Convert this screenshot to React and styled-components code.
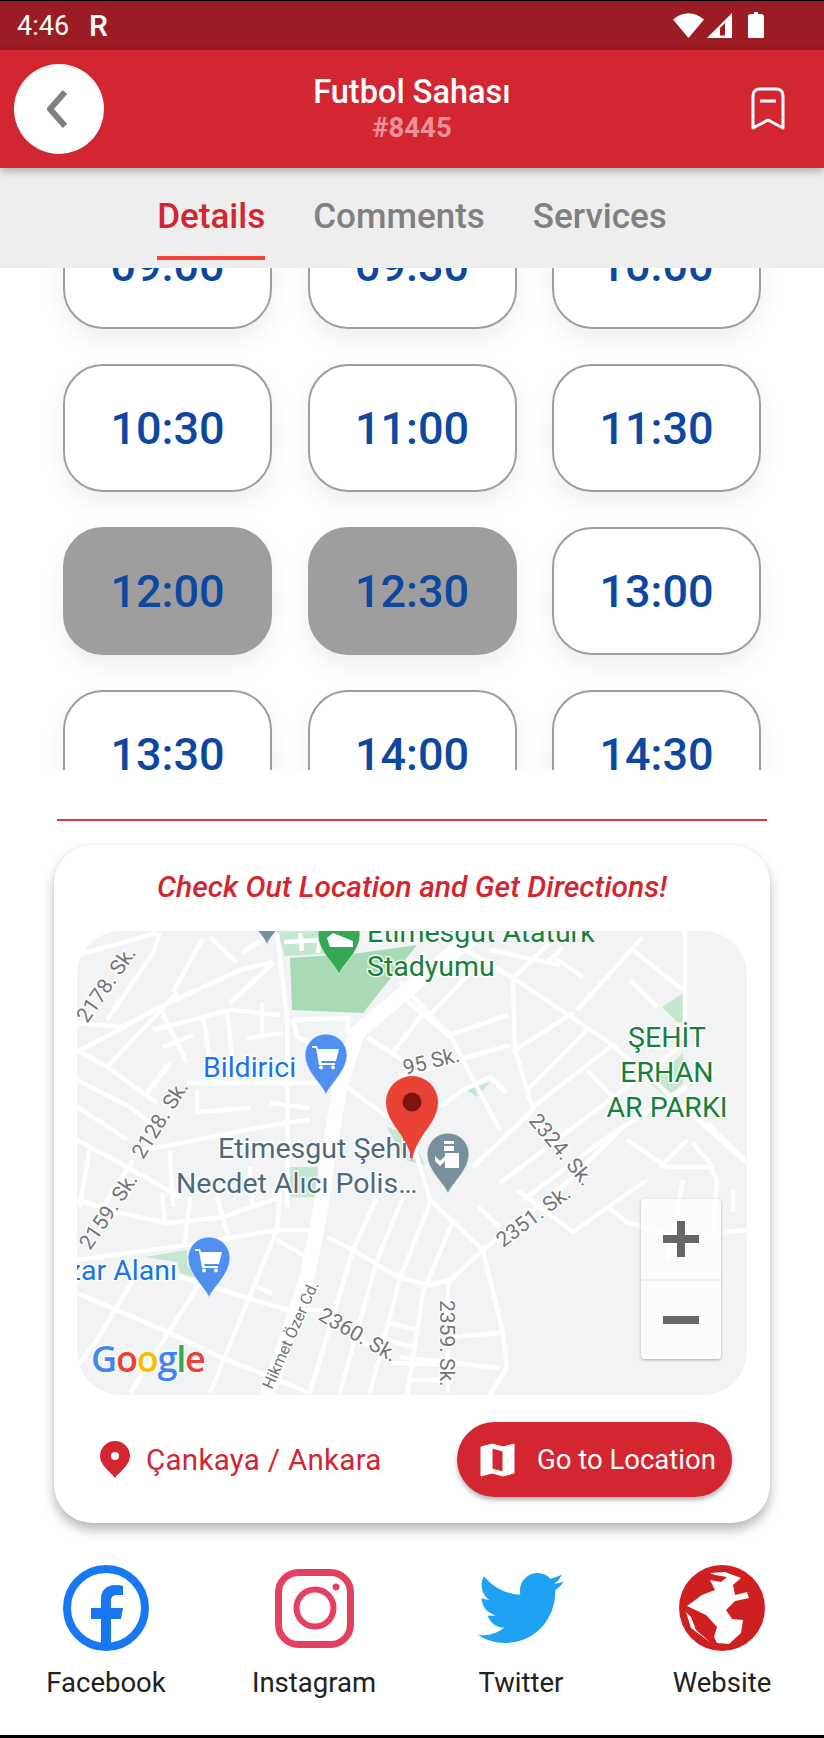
import styled, { createGlobalStyle } from 'styled-components';
import { FaTwitter } from 'react-icons/fa';

const times = [
  '09:00', '09:30', '10:00',
  '10:30', '11:00', '11:30',
  '12:00', '12:30', '13:00',
  '13:30', '14:00', '14:30',
];
const busyTimes = ['12:00', '12:30'];

// streets traced from the reference, in page coordinates (map starts at 77,931)
const roads = [
  '77,955 157,933', '107,1020 153,953 160,933', '77,1023 123,1027 160,1007 240,970 273,962',
  '160,1008 187,1063', '203,938 173,992', '237,963 210,937', '243,952 273,933', '230,1003 273,963',
  '277,933 287,1017 288,1137 287,1207', '153,1030 230,1010 280,1015', '163,1047 193,1035',
  '247,1038 283,1033', '262,1003 262,1037', '203,1015 213,1083', '227,1013 235,1083',
  '187,1083 323,1083', '197,1090 197,1112 250,1108', '270,1103 310,1108', '147,1093 170,1063',
  '293,1020 348,1018 347,1033', '293,1020 297,1037 310,1042', '80,1050 125,1027',
  '77,1050 107,1067 157,1103', '107,1067 177,993', '77,1080 130,1107 155,1127',
  '77,1107 113,1130 127,1140', '77,1140 127,1167 180,1197', '130,1153 283,1123 310,1120',
  '90,1147 80,1207', '133,1160 103,1207', '170,1150 173,1207', '250,1167 253,1207',
  '77,1200 120,1213 167,1223 223,1217 280,1197', '162,1193 165,1223', '190,1197 185,1243',
  '217,1197 228,1235', '280,1193 277,1230', '77,1260 187,1245 277,1230 313,1230',
  '277,1230 247,1303 210,1393', '200,1283 130,1393', '133,1280 97,1340 77,1367',
  '277,1240 307,1257', '257,1287 272,1293', '180,1277 287,1310 320,1310 393,1363 450,1365',
  '77,1293 170,1333 220,1357 310,1393', '327,1237 353,1250 400,1278 430,1285 450,1280 483,1250',
  '377,1197 353,1250 310,1393', '403,1197 377,1260 340,1393', '430,1203 400,1278 370,1393',
  '390,1323 417,1330', '387,1340 413,1347', '347,1087 387,1117 410,1133 430,1200 483,1250',
  '367,1037 407,1063', '403,997 450,1037', '423,1013 393,1053', '400,982 430,1015 450,1035 480,1093 500,1130',
  '430,1015 470,973', '450,1035 508,1015', '400,1077 510,1045', '440,1107 463,1090 490,1077 507,1093',
  '440,935 513,978 610,1043 747,1163', '513,978 515,1050 533,1110', '513,978 560,933',
  '577,1010 643,937', '633,950 683,990', '630,980 657,1007', '685,931 685,1040', '515,1050 573,1013',
  '527,1090 590,1027', '533,1107 610,1047', '587,1070 613,1097', '473,1167 533,1110',
  '500,1183 587,1117 680,1047', '523,1200 613,1133 687,1087', '627,1140 667,1167 710,1167 717,1180',
  '687,1140 660,1167', '693,1143 713,1167', '707,1123 747,1163', '490,950 560,965',
  '547,962 563,948', '553,957 583,977', '483,1250 570,1180 620,1130', '517,1190 573,1232 608,1207 647,1180',
  '608,1207 627,1222 677,1237 747,1230', '478,1207 500,1227', '452,1223 423,1293 407,1395',
  '483,1250 503,1333 507,1367 490,1395', '450,1337 500,1333', '400,1357 500,1368', '410,1380 443,1380',
  '448,1280 448,1393', '683,1180 673,1237 667,1260', '717,1180 713,1230', '733,1190 733,1212',
];

const parks = [
  '467,1090 490,1082 477,1097', '662,1007 685,992 685,1023 677,1022', '650,1083 683,1053 683,1083 667,1097',
  '387,1127 410,1135 425,1165 405,1160', '145,1257 187,1250 187,1265 197,1278 180,1273 177,1262',
  '287,1167 318,1167 318,1197 287,1197',
];

const streetLabels = [
  { text: '2178. Sk.', x: 87, y: 1024, angle: -55 },
  { text: '2128. Sk.', x: 143, y: 1160, angle: -58 },
  { text: '2159. Sk.', x: 90, y: 1251, angle: -56 },
  { text: '95 Sk.', x: 405, y: 1075, angle: -14 },
  { text: '2324. Sk.', x: 528, y: 1121, angle: 50 },
  { text: '2351. Sk.', x: 503, y: 1248, angle: -37 },
  { text: '2360. Sk.', x: 317, y: 1319, angle: 30 },
  { text: '2359. Sk.', x: 440, y: 1300, angle: 90 },
  { text: 'Hikmet Özer Cd.', x: 272, y: 1390, angle: -66, size: 16 },
];

const socials = [
  { name: 'Facebook', icon: <FacebookIcon /> },
  { name: 'Instagram', icon: <InstagramIcon /> },
  { name: 'Twitter', icon: <FaTwitter size={86} color="#1da1f2" /> },
  { name: 'Website', icon: <GlobeIcon /> },
];

function FacebookIcon() {
  return (
    <svg width="86" height="86" viewBox="0 0 86 86">
      <circle cx="43" cy="43" r="39" fill="none" stroke="#1877f2" strokeWidth="8" />
      <path
        fill="#1877f2"
        d="M38 84V54H28V43H38V34C38 25 44 20 52 20C55 20 58 20.4 60 21V30H54C50 30 48 32 48 36V43H60L58 54H48V84Z"
      />
    </svg>
  );
}

function InstagramIcon() {
  return (
    <svg width="79" height="79" viewBox="0 0 79 79" fill="none" stroke="#e4405f">
      <rect x="3.5" y="3.5" width="72" height="72" rx="20" strokeWidth="7" />
      <circle cx="40" cy="39" r="18.5" strokeWidth="6" />
      <circle cx="61" cy="18" r="3.5" fill="#e4405f" stroke="none" />
    </svg>
  );
}

function GlobeIcon() {
  return (
    <svg width="86" height="86" viewBox="0 0 86 86">
      <circle cx="43" cy="43" r="43" fill="#ce2020" />
      <path
        fill="#fff"
        d="M31 8L46 7L62 13L54 20L56 30L68 27L70 33L56 36L47 45L53 54L64 55L62 68L50 79L38 78L35 72L38 62L27 50L8 41L23 30L36 25L31 15L42 17L48 12L36 10Z"
      />
      <path fill="#fff" d="M7 47L12 63L32 78L17 65L12 52Z" />
    </svg>
  );
}

function StatusIcons() {
  return (
    <svg width="92" height="27" viewBox="0 0 92 27" fill="#fff">
      <path d="M15.5 26L0 7.5Q15.5 -5 31 7.5Z" />
      <path fillRule="evenodd" d="M34 26L59 1V26ZM52 11L47 16V23.5H52Z" />
      <path d="M79 2H81V0H85V2H87Q91 2 91 4V25Q91 26 89 26H77Q75 26 75 25V4Q75 2 79 2Z" />
    </svg>
  );
}

function MapPin({ left, top, color, children }) {
  return (
    <g transform={`translate(${left} ${top})`}>
      <path
        fill={color}
        stroke="#fff"
        strokeOpacity="0.6"
        d="M21 61C19 52 0 38 0 21A21 21 0 1 1 42 21C42 38 23 52 21 61Z"
      />
      {children}
    </g>
  );
}

function CartGlyph() {
  return (
    <g fill="#fff">
      <path d="M7 12H12L13 15H34L31 27H16L17 29H30V31H14L11 14H7Z" />
      <circle cx="16" cy="33.5" r="2" />
      <circle cx="28" cy="33.5" r="2" />
    </g>
  );
}

function MapDrawing() {
  return (
    <svg width="670" height="464" viewBox="77 931 670 464" style={{ display: 'block' }}>
      <rect x="77" y="931" width="670" height="464" fill="#f1f3f4" />
      <polygon points="290,958 360,953 417,945 363,1013 292,1010" fill="#a8dab5" />
      <polygon points="277,931 340,931 340,953 285,956" fill="#c5e6cf" />
      {parks.map((points) => (
        <polygon key={points} points={points} fill="#c5e6cf" />
      ))}
      <g fill="none" stroke="#fff" strokeWidth="4.5" strokeLinejoin="round">
        {roads.map((points) => (
          <polyline key={points} points={points} />
        ))}
        <polyline points="284,942 320,940 318,953" />
        <polyline points="300,933 302,951" />
      </g>
      <polyline
        points="480,931 423,977 357,1033 340,1087 327,1163 320,1213 308,1273 277,1367 267,1395"
        fill="none"
        stroke="#fff"
        strokeWidth="15"
      />
      {streetLabels.map(({ text, x, y, angle, size }) => (
        <StreetLabel key={text} x={x} y={y} $size={size} transform={`rotate(${angle} ${x} ${y})`}>
          {text}
        </StreetLabel>
      ))}
      <MapLabel x="367" y="942" $color="#188038">Etimesgut Atatürk</MapLabel>
      <MapLabel x="367" y="976" $color="#188038">Stadyumu</MapLabel>
      <MapLabel x="203" y="1077" $color="#1a73e8">Bildirici</MapLabel>
      <MapLabel x="218" y="1158" $color="#50697a">Etimesgut Şehir</MapLabel>
      <MapLabel x="176" y="1193" $color="#50697a">Necdet Alıcı Polis…</MapLabel>
      <MapLabel x="177" y="1280" $color="#1a73e8" textAnchor="end">Pazar Alanı</MapLabel>
      <MapLabel x="667" y="1047" $color="#188038" textAnchor="middle">ŞEHİT</MapLabel>
      <MapLabel x="667" y="1082" $color="#188038" textAnchor="middle">ERHAN</MapLabel>
      <MapLabel x="667" y="1117" $color="#188038" textAnchor="middle">AR PARKI</MapLabel>

      <MapPin left={246} top={884} color="#78909c" />
      <MapPin left={318} top={914} color="#34a853">
        <path fill="#fff" d="M9 24L15 19L35 27L35 33L12 33Z" />
      </MapPin>
      <MapPin left={305} top={1034} color="#4f8ff0">
        <CartGlyph />
      </MapPin>
      <MapPin left={188} top={1237} color="#4f8ff0">
        <CartGlyph />
      </MapPin>
      <MapPin left={427} top={1133} color="#78909c">
        <g fill="#fff">
          <rect x="17" y="8" width="10" height="3" />
          <rect x="17" y="13" width="10" height="5" />
          <path d="M18 20H32V35H18Z" />
          <path d="M8 23L13 28L20 21V26L13 33L8 28Z" />
        </g>
      </MapPin>
      <path
        fill="#ea4335"
        d="M412 1162C409 1135 386 1125 386 1102A26 26 0 1 1 438 1102C438 1125 415 1135 412 1162Z"
      />
      <circle cx="412" cy="1102" r="9.5" fill="#7f1410" />
      <GoogleMark x="91" y="1372">
        <tspan fill="#4285f4">G</tspan>
        <tspan fill="#ea4335">o</tspan>
        <tspan fill="#fbbc05">o</tspan>
        <tspan fill="#4285f4">g</tspan>
        <tspan fill="#34a853">l</tspan>
        <tspan fill="#ea4335">e</tspan>
      </GoogleMark>
    </svg>
  );
}

const App = () => {
  return (
    <Page>
      <GlobalStyle />
      <StatusBar>
        <StatusText>
          <span>4:46</span>
          <strong>R</strong>
        </StatusText>
        <StatusIcons />
      </StatusBar>

      <Header>
        <BackButton type="button">
          <svg width="22" height="38" viewBox="0 0 22 38" fill="none" stroke="#808080" strokeWidth="6">
            <polyline points="19,2 4,19 19,36" strokeLinejoin="round" />
          </svg>
        </BackButton>
        <TitleBlock>
          <Title>Futbol Sahası</Title>
          <Code>#8445</Code>
        </TitleBlock>
        <BookmarkButton type="button">
          <svg width="34" height="44" viewBox="0 0 34 44" fill="none" stroke="#fff" strokeWidth="3" strokeLinejoin="round">
            <path d="M2 9Q2 2 9 2H25Q32 2 32 9V41L17 33L2 41Z" />
            <path d="M9 14H25" />
          </svg>
        </BookmarkButton>
      </Header>

      <Tabs>
        <Tab $active>Details</Tab>
        <Tab>Comments</Tab>
        <Tab>Services</Tab>
      </Tabs>

      <SlotsViewport>
        <SlotsGrid>
          {times.map((time) => {
            return (
              <SlotButton type="button" key={time} $busy={busyTimes.includes(time)}>
                {time}
              </SlotButton>
            );
          })}
        </SlotsGrid>
      </SlotsViewport>

      <Divider />

      <LocationCard>
        <CardTitle>Check Out Location and Get Directions!</CardTitle>
        <MapFrame>
          <MapDrawing />
          <ZoomControls>
            <ZoomButton type="button">
              <svg width="36" height="36" viewBox="0 0 36 36" fill="#666">
                <path d="M14 0H22V14H36V22H22V36H14V22H0V14H14Z" />
              </svg>
            </ZoomButton>
            <ZoomButton type="button">
              <svg width="36" height="8" viewBox="0 0 36 8" fill="#666">
                <rect width="36" height="8" />
              </svg>
            </ZoomButton>
          </ZoomControls>
        </MapFrame>
        <CardFooter>
          <Address>
            <svg width="30" height="37" viewBox="0 0 30 37">
              <path
                fillRule="evenodd"
                fill="#d32630"
                d="M15 37C13 33 0 25 0 15A15 15 0 1 1 30 15C30 25 17 33 15 37ZM15 11A4 4 0 1 0 15 19A4 4 0 1 0 15 11Z"
              />
            </svg>
            <span>Çankaya / Ankara</span>
          </Address>
          <DirectionsButton type="button">
            <svg width="35" height="34" viewBox="0 0 35 34">
              <path
                fillRule="evenodd"
                fill="#fff"
                stroke="#fff"
                strokeLinejoin="round"
                d="M1 4L12 1L23 4L34 1V30L23 33L12 30L1 33ZM12 5V26L23 29V8Z"
              />
            </svg>
            <span>Go to Location</span>
          </DirectionsButton>
        </CardFooter>
      </LocationCard>

      <SocialRow>
        {socials.map(({ name, icon }) => {
          return (
            <SocialLink key={name}>
              <SocialIcon>{icon}</SocialIcon>
              <span>{name}</span>
            </SocialLink>
          );
        })}
      </SocialRow>

      <BottomEdge />
    </Page>
  );
};

const GlobalStyle = createGlobalStyle`
  html, body {
    margin: 0;
    padding: 0;
    background: #fff;
  }
  * {
    box-sizing: border-box;
  }
  body {
    font-family: Roboto, "Liberation Sans", sans-serif;
  }
  button {
    font-family: inherit;
    border: none;
    padding: 0;
  }
`;

const Page = styled.div`
  width: 824px;
  height: 1738px;
  display: flex;
  flex-direction: column;
  overflow: hidden;
  background: #fff;
`;

const StatusBar = styled.div`
  height: 50px;
  flex: none;
  border-top: 1px solid #000;
  background: #9b1c23;
  color: #fff;
  display: flex;
  align-items: center;
  justify-content: space-between;
  padding: 0 59px 0 17px;
`;

const StatusText = styled.div`
  display: flex;
  align-items: center;
  gap: 20px;
  font-size: 27px;
  font-weight: 400;
  strong {
    font-size: 30px;
    font-weight: 500;
  }
`;

const Header = styled.header`
  position: relative;
  z-index: 2;
  height: 118px;
  flex: none;
  background: #d32630;
  box-shadow: 0 3px 8px rgba(0, 0, 0, 0.3);
  display: grid;
  grid-template-columns: 1fr auto 1fr;
  align-items: center;
  padding: 0 14px;
`;

const BackButton = styled.button`
  width: 90px;
  height: 90px;
  border-radius: 50%;
  background: #fff;
  display: flex;
  align-items: center;
  justify-content: center;
  padding-right: 4px;
`;

const TitleBlock = styled.div`
  display: flex;
  flex-direction: column;
  align-items: center;
`;

const Title = styled.div`
  color: #fff;
  font-size: 32.5px;
  font-weight: 500;
  line-height: 38px;
`;

const Code = styled.div`
  color: rgba(255, 255, 255, 0.5);
  font-size: 27.5px;
  font-weight: 700;
  line-height: 34px;
`;

const BookmarkButton = styled.button`
  background: transparent;
  justify-self: end;
  margin-right: 25px;
  display: flex;
`;

const Tabs = styled.nav`
  height: 100px;
  flex: none;
  background: #eee;
  display: flex;
  justify-content: center;
  gap: 48px;
`;

const Tab = styled.div`
  height: 92px;
  display: flex;
  align-items: center;
  padding-top: 8px;
  font-size: 35px;
  font-weight: 500;
  color: ${({ $active }) => ($active ? '#d32630' : '#808080')};
  border-bottom: 4px solid ${({ $active }) => ($active ? '#f44336' : 'transparent')};
`;

const SlotsViewport = styled.div`
  height: 502px;
  flex: none;
  overflow: hidden;
`;

const SlotsGrid = styled.div`
  margin-top: -67px;
  padding: 0 63px;
  display: grid;
  grid-template-columns: repeat(3, 209px);
  grid-auto-rows: 128px;
  gap: 35px 35.5px;
`;

const SlotButton = styled.button`
  border-radius: 40px;
  border: 2px solid #9e9e9e;
  background: ${({ $busy }) => ($busy ? '#9e9e9e' : '#fff')};
  box-shadow: 0 10px 22px rgba(0, 0, 0, 0.07);
  color: #0d47a1;
  font-size: 45px;
  font-weight: 500;
`;

const Divider = styled.div`
  height: 2px;
  flex: none;
  margin: 49px 57px 0;
  background: #dc3545;
`;

const LocationCard = styled.section`
  flex: none;
  margin: 24px 54px 0;
  height: 678px;
  padding: 26px 23px 0;
  background: #fff;
  border-radius: 38px;
  box-shadow: 0 0 2px rgba(0, 0, 0, 0.08), 0 7px 12px rgba(0, 0, 0, 0.28);
`;

const CardTitle = styled.h2`
  margin: 0 0 28px;
  text-align: center;
  color: #d32630;
  font-size: 30px;
  font-weight: 500;
  font-style: italic;
  line-height: 32px;
  white-space: nowrap;
`;

const MapFrame = styled.div`
  position: relative;
  height: 464px;
  border-radius: 44px;
  overflow: hidden;
`;

const MapLabel = styled.text`
  font-family: Roboto, sans-serif;
  font-size: 28.5px;
  fill: ${({ $color }) => $color};
  stroke: rgba(255, 255, 255, 0.85);
  stroke-width: 3px;
  paint-order: stroke;
`;

const StreetLabel = styled.text`
  font-family: Roboto, sans-serif;
  font-size: ${({ $size }) => $size || 21}px;
  fill: #70757a;
  stroke: rgba(255, 255, 255, 0.85);
  stroke-width: 3px;
  paint-order: stroke;
`;

const GoogleMark = styled.text`
  font-family: "Open Sans", Roboto, sans-serif;
  font-size: 36px;
  font-weight: 600;
  letter-spacing: -1.2px;
  stroke: rgba(255, 255, 255, 0.8);
  stroke-width: 3px;
  paint-order: stroke;
`;

const ZoomControls = styled.div`
  position: absolute;
  top: 268px;
  right: 26px;
  width: 80px;
  height: 160px;
  display: grid;
  grid-template-rows: 1fr 1fr;
  background: rgba(255, 255, 255, 0.7);
  border-radius: 4px;
  box-shadow: 0 1px 3px rgba(0, 0, 0, 0.3);
`;

const ZoomButton = styled.button`
  background: transparent;
  display: flex;
  align-items: center;
  justify-content: center;
  & + & {
    border-top: 2px solid #eee;
  }
`;

const CardFooter = styled.div`
  margin-top: 27px;
  padding: 0 15px 0 23px;
  display: flex;
  align-items: center;
  justify-content: space-between;
`;

const Address = styled.div`
  display: flex;
  align-items: center;
  gap: 16px;
  color: #d32630;
  font-size: 29.5px;
  letter-spacing: 0.3px;
`;

const DirectionsButton = styled.button`
  width: 275px;
  height: 75px;
  border-radius: 38px;
  background: #d32630;
  color: #fff;
  font-size: 27.5px;
  box-shadow: 0 3px 5px rgba(0, 0, 0, 0.3);
  display: flex;
  align-items: center;
  gap: 22px;
  padding-left: 23px;
`;

const SocialRow = styled.div`
  flex: none;
  margin-top: 42px;
  display: grid;
  grid-template-columns: 212px 204px 210px 192px;
`;

const SocialLink = styled.div`
  display: flex;
  flex-direction: column;
  align-items: center;
  gap: 16px;
  color: #212121;
  font-size: 27.5px;
  line-height: 32px;
`;

const SocialIcon = styled.div`
  height: 86px;
  display: flex;
  align-items: center;
  justify-content: center;
`;

const BottomEdge = styled.div`
  margin-top: auto;
  height: 3px;
  flex: none;
  background: #000;
`;

export default App;
